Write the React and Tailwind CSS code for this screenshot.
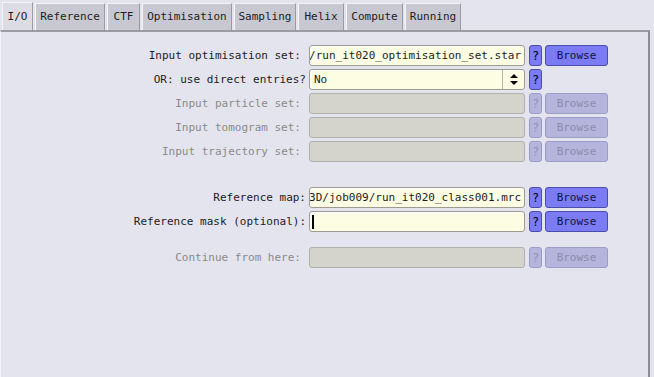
import React from 'react';

const tabs = [
  { name: 'I/O', w: 'w-[31px]' },
  { name: 'Reference', w: 'w-[70px]' },
  { name: 'CTF', w: 'w-[33px]' },
  { name: 'Optimisation', w: 'w-[90px]' },
  { name: 'Sampling', w: 'w-[62px]' },
  { name: 'Helix', w: 'w-[46px]' },
  { name: 'Compute', w: 'w-[57px]' },
  { name: 'Running', w: 'w-[56px]' },
];

// champ texte : on ne voit que la fin du chemin
const Field = ({ value, disabled, caret }) => (
  <div
    className={
      'h-[21px] w-[216px] rounded-[3px] border flex items-center overflow-hidden whitespace-nowrap ' +
      (disabled
        ? 'bg-[#d4d4cc] border-[#b0b0aa]'
        : 'bg-[#fdfde4] border-[#9c9c94] shadow-[inset_1px_1px_0_#ffffff]')
    }
  >
    {caret ? (
      <div className="ml-[2px] w-[2px] h-[14px] bg-black" />
    ) : (
      <div className="flex-1 flex justify-end pr-[3px] overflow-hidden">
        <span className="text-[#1c1c1c]">{value}</span>
      </div>
    )}
  </div>
);

const Help = ({ disabled }) => (
  <div
    className={
      'h-[21px] w-[13px] rounded-[3px] border flex items-center justify-center text-[12px] ' +
      (disabled
        ? 'bg-[#b4b4dc] border-[#9c9cc8] text-[#9494b0]'
        : 'bg-[#7b7bf4] border-[#4c4cac] text-black')
    }
  >
    ?
  </div>
);

const Browse = ({ disabled }) => (
  <div
    className={
      'h-[21px] w-[63px] rounded-[3px] border flex items-center justify-center ' +
      (disabled
        ? 'bg-[#b4b4dc] border-[#9c9cc8] text-[#8c8cac]'
        : 'bg-[#7b7bf4] border-[#4c4cac] text-[#14143c]')
    }
  >
    Browse
  </div>
);

const Row = ({ label, value, disabled, caret, wide, className = '' }) => (
  <div className={'flex items-center h-[21px] ' + className}>
    <div
      className={
        'w-[306px] text-right whitespace-nowrap ' +
        (wide ? 'pr-[1px] ' : 'pr-[6px] ') +
        (disabled ? 'text-[#8a8a8a]' : 'text-[#1c1c1c]')
      }
    >
      {label}
    </div>
    <div className="ml-[2px]">
      <Field value={value} disabled={disabled} caret={caret} />
    </div>
    <div className="ml-[4px]">
      <Help disabled={disabled} />
    </div>
    <div className="ml-[3px]">
      <Browse disabled={disabled} />
    </div>
  </div>
);

const App = () => {
  return (
    <div
      className="w-[654px] h-[377px] bg-[#e4e4ee] text-[11px] leading-[14px] text-[#1c1c1c] flex flex-col overflow-hidden"
      style={{ fontFamily: '"DejaVu Sans Mono", monospace' }}
    >
      {/* onglets */}
      <div className="flex items-end gap-[2px] pl-[2px] pt-[3px] h-[30px]">
        {tabs.map((t, i) => (
          <div
            key={t.name}
            className={
              t.w +
              ' flex items-center justify-center border-t border-l border-r border-t-[#f4f4f8] border-l-[#f4f4f8] border-r-[#9a9aa4] ' +
              (i === 0 ? 'bg-[#dcdce6] h-[28px]' : 'bg-[#c8c8d2] h-[27px]')
            }
          >
            {t.name}
          </div>
        ))}
      </div>

      {/* panneau */}
      <div className="flex-1 border-t-2 border-t-[#9c9ca4] border-r-2 border-r-[#8c8c94] border-l border-l-[#f4f4f8] mr-[4px] pt-[13px] flex flex-col">
        <Row label="Input optimisation set:" value="/run_it020_optimisation_set.star" />

        <div className="flex items-center h-[21px] mt-[3px]">
          <div className="w-[306px] text-right pr-[1px] whitespace-nowrap">OR: use direct entries?</div>
          <div className="ml-[2px] h-[21px] w-[216px] rounded-[3px] border border-[#9c9c94] bg-[#fdfde4] shadow-[inset_1px_1px_0_#ffffff] flex items-center">
            <span className="flex-1 pl-[4px]">No</span>
            <div className="w-[22px] h-full border-l border-l-[#b4b4aa] flex items-center justify-center">
              <svg width="8" height="11" viewBox="0 0 8 11">
                <path d="M4 0 L8 4 L0 4 Z" fill="#000" />
                <path d="M0 7 L8 7 L4 11 Z" fill="#000" />
              </svg>
            </div>
          </div>
          <div className="ml-[4px]">
            <Help />
          </div>
        </div>

        <Row label="Input particle set:" disabled className="mt-[3px]" />
        <Row label="Input tomogram set:" disabled className="mt-[3px]" />
        <Row label="Input trajectory set:" disabled className="mt-[3px]" />

        <Row
          label="Reference map:"
          value="3D/job009/run_it020_class001.mrc"
          wide
          className="mt-[25px]"
        />
        <Row label="Reference mask (optional):" caret wide className="mt-[3px]" />

        <Row label="Continue from here:" disabled className="mt-[15px]" />
      </div>
    </div>
  );
};

export default App;
